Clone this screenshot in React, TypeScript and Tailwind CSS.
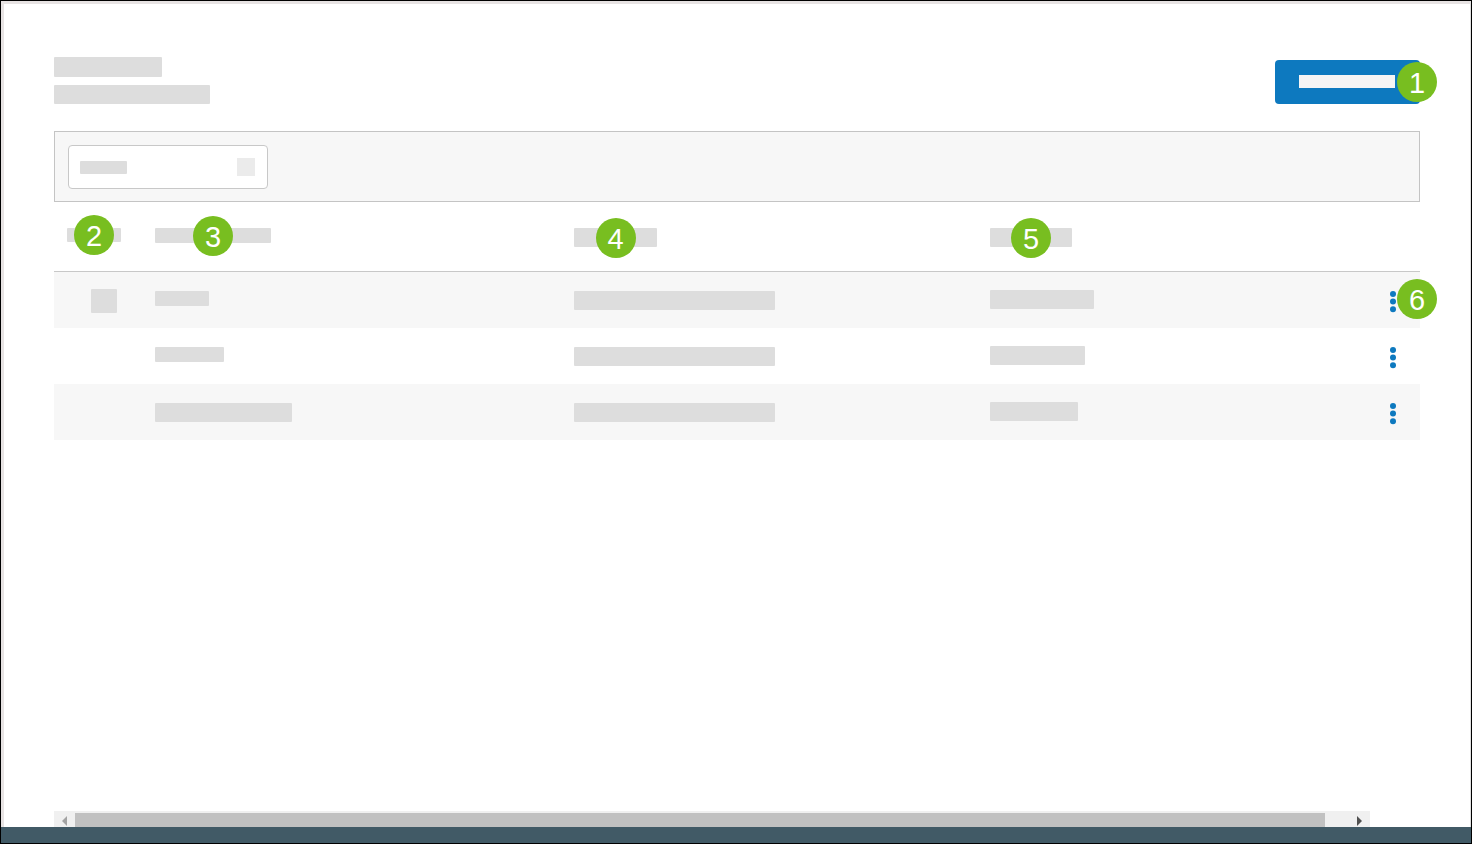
import * as React from "react";
import { clsx } from "clsx";

const columns = [
  { bar: "w-[54px] h-[14px]", marker: 2 },
  { bar: "w-[116px] h-[15px]", marker: 3 },
  { bar: "w-[83px] h-[19px]", marker: 4 },
  { bar: "w-[82px] h-[19px]", marker: 5 },
];

const rows = [
  {
    thumb: true,
    name: "w-[54px] h-[15px]",
    detail: "w-[201px] h-[19px]",
    status: "w-[104px] h-[19px]",
    marker: 6,
  },
  {
    name: "w-[69px] h-[15px]",
    detail: "w-[201px] h-[19px]",
    status: "w-[95px] h-[19px]",
  },
  {
    name: "w-[137px] h-[19px]",
    detail: "w-[201px] h-[19px]",
    status: "w-[88px] h-[19px]",
  },
];

function Bar({ className, children }: { className: string; children?: React.ReactNode }) {
  return (
    <div className={clsx("flex items-center justify-center rounded-[1px] bg-[#ddd]", className)}>
      {children}
    </div>
  );
}

function Marker({ value, className }: { value: number; className?: string }) {
  return (
    <span
      className={clsx(
        "flex size-10 shrink-0 items-center justify-center rounded-full bg-[#78be20] pt-0.5 text-[29px] leading-10 font-normal text-white",
        className
      )}
    >
      {value}
    </span>
  );
}

function DotsIcon() {
  return (
    <svg viewBox="0 0 6 22" className="h-[22px] w-1.5 fill-[#0d79bf]" aria-hidden="true">
      <circle cx="3" cy="3" r="3" />
      <circle cx="3" cy="10.6" r="3" />
      <circle cx="3" cy="18.2" r="3" />
    </svg>
  );
}

function DataTable() {
  return (
    <table className="w-full table-fixed border-separate border-spacing-0">
      <colgroup>
        <col className="w-[88px]" />
        <col className="w-[419px]" />
        <col className="w-[416px]" />
        <col />
        <col className="w-[54px]" />
      </colgroup>
      <thead>
        <tr>
          {columns.map((column) => (
            <th
              key={column.marker}
              scope="col"
              className="h-[70px] border-b border-[#c8c8c8] pt-[26px] pl-[13px] align-top"
            >
              <Bar className={column.bar}>
                <Marker value={column.marker} />
              </Bar>
            </th>
          ))}
          <th className="border-b border-[#c8c8c8]" />
        </tr>
      </thead>
      <tbody>
        {rows.map((row) => (
          <tr key={row.name} className="odd:bg-[#f7f7f7]">
            <td className="h-14 pt-[17px] pl-[37px] align-top">
              {row.thumb && <Bar className="h-6 w-[26px]" />}
            </td>
            <td className="h-14 pt-[19px] pl-[13px] align-top">
              <Bar className={row.name} />
            </td>
            <td className="h-14 pt-[19px] pl-[13px] align-top">
              <Bar className={row.detail} />
            </td>
            <td className="h-14 pt-[18px] pl-[13px] align-top">
              <Bar className={row.status} />
            </td>
            <td className="relative h-14 pt-[19px] align-top">
              <button type="button" aria-label="Row actions" className="mx-auto block">
                <DotsIcon />
              </button>
              {row.marker && <Marker value={row.marker} className="absolute top-[7px] -right-[17px]" />}
            </td>
          </tr>
        ))}
      </tbody>
    </table>
  );
}

function HorizontalScrollbar() {
  return (
    <div className="mr-[50px] flex h-4 bg-[#f0f0f0] pt-0.5">
      <button type="button" aria-label="Scroll left" className="flex w-[21px] items-center pt-0.5 pl-2">
        <svg viewBox="0 0 5 10" className="h-2.5 w-[5px] fill-[#a3a3a3]" aria-hidden="true">
          <path d="M5 0v10L0 5z" />
        </svg>
      </button>
      <div className="flex-1 bg-[#c1c1c1]" />
      <button type="button" aria-label="Scroll right" className="flex w-[45px] items-center pt-0.5 pl-8">
        <svg viewBox="0 0 5 10" className="h-2.5 w-[5px] fill-[#505050]" aria-hidden="true">
          <path d="M0 0v10l5-5z" />
        </svg>
      </button>
    </div>
  );
}

export default function App() {
  return (
    <div className="flex min-h-screen flex-col border border-black bg-white font-['Liberation_Sans',Arial,sans-serif]">
      <main className="flex flex-1 flex-col border-t-[3px] border-r border-l-[3px] border-[#e7e3e3] border-r-[#e0e0e0] pt-[53px] pr-[50px] pl-[50px]">
        <header className="mb-[27px] flex items-end justify-between">
          <div className="flex flex-col gap-2">
            <Bar className="h-5 w-[108px]" />
            <Bar className="h-[19px] w-[156px]" />
          </div>
          <button
            type="button"
            aria-label="Create"
            className="relative flex h-11 w-[145px] items-center rounded-[4px] bg-[#0d79bf] pb-px pl-6"
          >
            <span className="h-[13px] w-24 bg-[#f5f5f5]" />
            <Marker value={1} className="absolute top-0.5 -right-[17px]" />
          </button>
        </header>

        <section className="border border-[#c4c4c4] bg-[#f7f7f7] px-[13px] pt-[13px] pb-3">
          <label className="flex h-11 w-[200px] items-center rounded-[4px] border border-[#c8c8c8] bg-white pr-3 pl-[11px]">
            <Bar className="h-[13px] w-[47px]" />
            <input type="text" aria-label="Filter" className="min-w-0 flex-1 bg-transparent outline-none" />
            <span className="size-[18px] bg-[#ebebeb]" />
          </label>
        </section>

        <DataTable />

        <div className="mt-auto pt-6">
          <HorizontalScrollbar />
        </div>
      </main>
      <footer className="h-4 bg-[#415a66]" />
    </div>
  );
}
